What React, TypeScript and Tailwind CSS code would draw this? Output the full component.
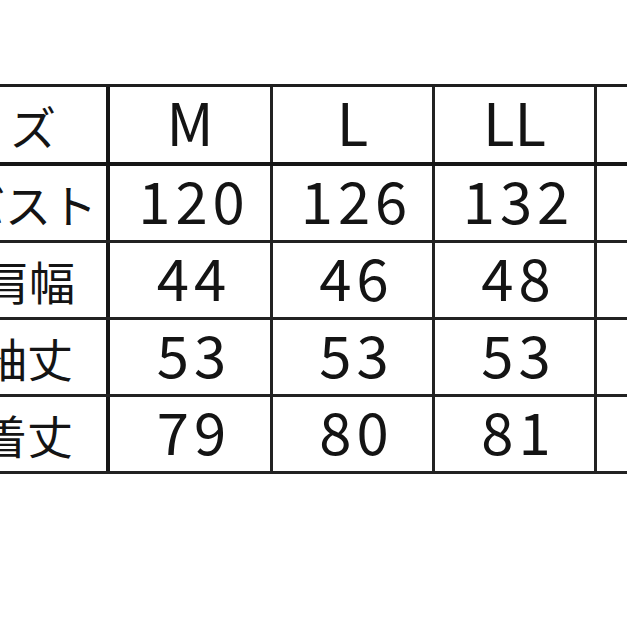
const headers = ["M", "L", "LL", "3L"];

const rows = [
  { label: "バスト", pad: "pr-[9px]", values: ["120", "126", "132", "138"] },
  { label: "肩幅", pad: "pr-[31px]", values: ["44", "46", "48", "50"] },
  { label: "袖丈", pad: "pr-[33px]", values: ["53", "53", "53", "54"] },
  { label: "着丈", pad: "pr-[33px]", values: ["79", "80", "81", "82"] },
];

const colWidths = ["w-[163px]", "w-[162px]", "w-[162px]", "w-[162px]"];

const font = { fontFamily: '"Noto Sans CJK JP", "Noto Sans", sans-serif' };

export default function App() {
  return (
    <div
      className="w-[627px] h-[627px] bg-white overflow-hidden pt-[84px] text-[#141414]"
      style={font}
    >
      <div className="w-[800px] border-t-[3px] border-[#1e1e1e]">
        {/* header row */}
        <div className="flex h-[79px] border-b-[4px] border-[#161616]">
          <div className="w-[110px] shrink-0 flex items-center justify-end pr-[36px] border-r-[4px] border-[#161616] overflow-hidden whitespace-nowrap text-[46px] leading-none tracking-[14px]">
            サイズ
          </div>
          {headers.map((h, i) => (
            <div
              key={h}
              className={`${colWidths[i]} shrink-0 flex items-center justify-center pb-[7px] border-r-[3px] border-[#222] text-[58px] leading-none`}
            >
              {h}
            </div>
          ))}
        </div>

        {rows.map((row) => (
          <div
            key={row.label}
            className="flex h-[77px] border-b-[3px] border-[#222]"
          >
            <div
              className={`w-[110px] shrink-0 flex items-center justify-end ${row.pad} border-r-[4px] border-[#161616] overflow-hidden whitespace-nowrap text-[46px] leading-none`}
            >
              {row.label}
            </div>
            {row.values.map((v, i) => (
              <div
                key={i}
                className={`${colWidths[i]} shrink-0 flex items-center justify-center pl-[8px] pb-[8px] border-r-[3px] border-[#222] text-[58px] leading-none tracking-[5px]`}
              >
                {v}
              </div>
            ))}
          </div>
        ))}
      </div>
    </div>
  );
}
